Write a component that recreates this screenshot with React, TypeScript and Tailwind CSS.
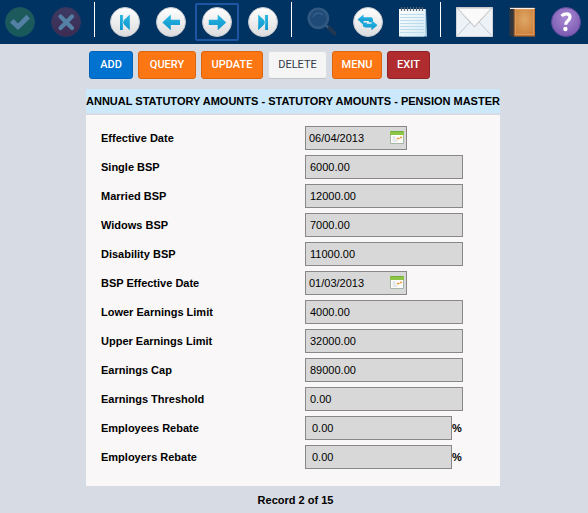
import React, { useState } from "react";

type Field = { id: string; label: string; value: string; kind: "amount" | "date" | "percent" };

const FIELDS: Field[] = [
  { id: "effective-date", label: "Effective Date", value: "06/04/2013", kind: "date" },
  { id: "single-bsp", label: "Single BSP", value: "6000.00", kind: "amount" },
  { id: "married-bsp", label: "Married BSP", value: "12000.00", kind: "amount" },
  { id: "widows-bsp", label: "Widows BSP", value: "7000.00", kind: "amount" },
  { id: "disability-bsp", label: "Disability BSP", value: "11000.00", kind: "amount" },
  { id: "bsp-effective-date", label: "BSP Effective Date", value: "01/03/2013", kind: "date" },
  { id: "lower-limit", label: "Lower Earnings Limit", value: "4000.00", kind: "amount" },
  { id: "upper-limit", label: "Upper Earnings Limit", value: "32000.00", kind: "amount" },
  { id: "earnings-cap", label: "Earnings Cap", value: "89000.00", kind: "amount" },
  { id: "earnings-threshold", label: "Earnings Threshold", value: "0.00", kind: "amount" },
  { id: "employees-rebate", label: "Employees Rebate", value: "0.00", kind: "percent" },
  { id: "employers-rebate", label: "Employers Rebate", value: "0.00", kind: "percent" },
];

const INPUT_STYLE: Record<Field["kind"], string> = {
  amount: "w-[158px] pl-1",
  date: "w-[102px] pl-[3px]",
  percent: "w-[147px] pl-1.5",
};

function Gradients() {
  return (
    <svg className="absolute size-0" aria-hidden="true">
      <defs>
        <linearGradient id="disc" x1="0" y1="0" x2="0" y2="1">
          <stop offset="0" stopColor="#ffffff" />
          <stop offset="1" stopColor="#dcdcde" />
        </linearGradient>
        <linearGradient id="arrow" x1="0" y1="0" x2="0" y2="1">
          <stop offset="0" stopColor="#2cb8e4" />
          <stop offset="1" stopColor="#0c94cc" />
        </linearGradient>
        <linearGradient id="green" x1="0" y1="0" x2="0" y2="1">
          <stop offset="0" stopColor="#1f5a5c" />
          <stop offset="1" stopColor="#17595a" />
        </linearGradient>
        <linearGradient id="red" x1="0" y1="0" x2="0" y2="1">
          <stop offset="0" stopColor="#3c3a63" />
          <stop offset="1" stopColor="#3e2b52" />
        </linearGradient>
        <radialGradient id="purple" cx="0.5" cy="0.35" r="0.65">
          <stop offset="0" stopColor="#a98ad2" />
          <stop offset="1" stopColor="#7a59b0" />
        </radialGradient>
        <linearGradient id="page" x1="0" y1="0" x2="1" y2="1">
          <stop offset="0" stopColor="#ffffff" />
          <stop offset="1" stopColor="#d3e9f4" />
        </linearGradient>
        <radialGradient id="leather" cx="0.5" cy="0.4" r="0.8">
          <stop offset="0" stopColor="#dfa766" />
          <stop offset="1" stopColor="#c97a35" />
        </radialGradient>
      </defs>
    </svg>
  );
}

function Disc({ children, fill = "url(#disc)", rim = "#c3c7cd" }: { children: React.ReactNode; fill?: string; rim?: string }) {
  return (
    <svg viewBox="0 0 30 30" className="block h-[30px] w-[30px]" aria-hidden="true">
      <circle cx="15" cy="15" r="14.5" fill={fill} stroke={rim} strokeWidth="1" />
      {children}
    </svg>
  );
}

const CheckIcon = () => (
  <Disc fill="url(#green)" rim="#1c5761">
    <path d="M5 15.5 8.5 12l4.5 4.4 8.4-8.6 3.6 3.6L13 23z" fill="#5580a5" />
  </Disc>
);
const CancelIcon = () => (
  <Disc fill="url(#red)" rim="#36355d">
    <path d="M9.5 9.5l11.5 11.5M21 9.5l-11.5 11.5" stroke="#5580a5" strokeWidth="4.2" strokeLinecap="round" />
  </Disc>
);
const FirstIcon = () => (
  <Disc>
    <path d="M10 8h3.2v5.8L19.8 7.6v15.6l-6.6-6.4V23H10z" fill="url(#arrow)" />
    <path d="M13.3 8v6.6l-.8.8.8 1V23" stroke="#f2f5f7" strokeWidth="0.7" fill="none" />
  </Disc>
);
const LastIcon = () => (
  <Disc>
    <path d="M20 8h-3.2v5.8L10.2 7.6v15.6l6.6-6.4V23H20z" fill="url(#arrow)" />
    <path d="M16.7 8v6.6l.8.8-.8 1V23" stroke="#f2f5f7" strokeWidth="0.7" fill="none" />
  </Disc>
);
const PrevIcon = () => (
  <Disc>
    <path d="M6.3 15.5l8.5-8v5.3H24V18h-9.2v5.3z" fill="url(#arrow)" />
  </Disc>
);
const NextIcon = () => (
  <Disc>
    <path d="M24.2 15.5l-8.5-8v5.3H6.8V18h8.9v5.3z" fill="url(#arrow)" />
  </Disc>
);
const RefreshIcon = () => (
  <Disc>
    <path d="M4.5 12.5l6-5v2.8h7.2q2.3 0 2.3 2.4v2.6h-4.2v-1.2h-5.3v3.6z" fill="url(#arrow)" />
    <path d="M24.5 18.3l-6 5v-2.8h-6.3q-2.4 0-2.4-2.4v-2.6h4.2v1.2h4.5v-3.6z" fill="url(#arrow)" />
  </Disc>
);
const HelpIcon = () => (
  <Disc fill="url(#purple)" rim="#5e4a9c">
    <path d="M10.6 9q2-2.2 4.6-2.2 3.8 0 3.8 3.3 0 2-2.3 3.8-2 1.5-2 3.9" fill="none" stroke="#fff" strokeWidth="3.2" />
    <circle cx="14.4" cy="22" r="2.2" fill="#fff" />
  </Disc>
);
const SearchIcon = () => (
  <svg viewBox="0 0 30 30" className="block h-[30px] w-[30px]" aria-hidden="true">
    <path d="M21.5 20.5l6 6" stroke="#213850" strokeWidth="4" strokeLinecap="round" />
    <path d="M18 17.5l3 3" stroke="#3a5d82" strokeWidth="2.4" />
    <circle cx="11.3" cy="11.3" r="9.6" fill="#1f4a78" stroke="#315880" strokeWidth="2.6" />
    <path d="M6 10a6 6 0 0 1 10-2" stroke="#345f8b" strokeWidth="1.5" fill="none" />
  </svg>
);
const NotesIcon = () => (
  <svg viewBox="0 0 28 30" className="block h-[30px] w-7" aria-hidden="true">
    <path d="M2 2h25l1 27.5H2z" fill="#a9cfe2" />
    <path d="M0 2h26v26.5l-1 1H0z" fill="url(#page)" />
    <path d="M1 7.5h24M1 10.5h24M1 13.5h24M1 16.5h24M1 19.5h24M1 22.5h24M1 25.5h24" stroke="#bcdcec" strokeWidth="1" />
    <path d="M2.5 0v4M5.5 0v4M8.5 0v4M11.5 0v4M14.5 0v4M17.5 0v4M20.5 0v4M23.5 0v4" stroke="#5c6670" strokeWidth="1.2" />
  </svg>
);
const MailIcon = () => (
  <svg viewBox="0 0 37 30" className="block h-[30px] w-[37px]" aria-hidden="true">
    <path d="M.5.5h36v29H.5z" fill="#edf2f6" stroke="#d0d4d8" />
    <path d="M1.5 28.5L14 15M35.5 28.5L23 15" stroke="#bdc8d2" fill="none" />
    <path d="M1 1h35L18.5 20z" fill="#fafafa" stroke="#bcbfc2" />
    <path d="M2.5 1.8L18.5 19l16-17.2" stroke="#e0e0e0" fill="none" />
  </svg>
);
const BookIcon = () => (
  <svg viewBox="0 0 26 30" className="block h-[30px] w-[26px]" aria-hidden="true">
    <path d="M.5.5h25v29H2q-1.5 0-1.5-2z" fill="#32363c" />
    <path d="M5 1v28.5h21V1z" fill="#b96f30" />
    <path d="M6.5 2.5h18v25h-18z" fill="url(#leather)" stroke="#e3a566" strokeWidth="0.8" />
    <path d="M1 1.4h24.6" stroke="#fff" strokeWidth="1" />
    <path d="M4.8 2v27" stroke="#5d4a3c" strokeWidth="1" />
  </svg>
);
const CalendarIcon = () => (
  <svg viewBox="0 0 14 13" className="block h-[13px] w-3.5" aria-hidden="true">
    <path d="M.5.5h13v12H.5z" fill="#fbfcfb" stroke="#a5b5a8" />
    <path d="M0 0h14v4H0z" fill="#8cc644" />
    <path d="M1 0h12v1H1z" fill="#6fae3c" />
    <path d="M2.5 6h3M2.5 8h4M2.5 10h5" stroke="#d3d8dc" />
    <path d="M7 7.5h2.5M10 6.5h2" stroke="#f39a2c" strokeWidth="1.4" />
  </svg>
);

function ToolButton({ label, focused, disabled, children }: { label: string; focused?: boolean; disabled?: boolean; children: React.ReactNode }) {
  return (
    <button type="button" aria-label={label} disabled={disabled} className="relative shrink-0">
      {focused && <span className="absolute -inset-x-[7px] -inset-y-1 rounded-xs border-2 border-[#1f56a4]" />}
      {children}
    </button>
  );
}

const Divider = () => <div className="-mt-[5px] mr-[15px] ml-[13px] h-[35px] w-px shrink-0 bg-white" />;

function Toolbar() {
  return (
    <nav className="flex h-11 items-start bg-[#003262] pt-[7px] pl-[5px]">
      <div className="flex gap-4">
        <ToolButton label="Accept" disabled><CheckIcon /></ToolButton>
        <ToolButton label="Cancel" disabled><CancelIcon /></ToolButton>
      </div>
      <Divider />
      <div className="flex gap-4">
        <ToolButton label="First record"><FirstIcon /></ToolButton>
        <ToolButton label="Previous record"><PrevIcon /></ToolButton>
        <ToolButton label="Next record" focused><NextIcon /></ToolButton>
        <ToolButton label="Last record"><LastIcon /></ToolButton>
      </div>
      <Divider />
      <div className="flex gap-4">
        <ToolButton label="Search" disabled><SearchIcon /></ToolButton>
        <ToolButton label="Refresh"><RefreshIcon /></ToolButton>
        <ToolButton label="Notes"><NotesIcon /></ToolButton>
      </div>
      <Divider />
      <div className="flex gap-4">
        <ToolButton label="Mail"><MailIcon /></ToolButton>
        <ToolButton label="Manual"><BookIcon /></ToolButton>
        <ToolButton label="Help"><HelpIcon /></ToolButton>
      </div>
    </nav>
  );
}

const ORANGE = "border-[#dc6410] bg-[#fc7614] text-white font-medium";

const ACTIONS = [
  { text: "ADD", look: "w-11 border-[#0062b8] bg-[#0072d0] text-white font-medium" },
  { text: "QUERY", look: "w-[58px] " + ORANGE },
  { text: "UPDATE", look: "w-[62px] " + ORANGE },
  { text: "DELETE", look: "w-[59px] border-[#dcdee2] border-b-[#c0c3c8] bg-[#f5f5f5] text-[#333a48]" },
  { text: "MENU", look: "w-[50px] " + ORANGE },
  { text: "EXIT", look: "w-[43px] border-[#8f2226] bg-[#b02c2f] text-white font-medium" },
];

function FieldRow({ field }: { field: Field }) {
  const [value, setValue] = useState(field.value);
  return (
    <div className="flex items-center">
      <label htmlFor={field.id} className="w-[204px] shrink-0 font-bold">{field.label}</label>
      <div className="relative">
        <input
          id={field.id}
          type="text"
          value={value}
          onChange={(e) => setValue(e.target.value)}
          className={"block h-6 border border-[#888888] bg-[#d8d8d8] outline-none " + INPUT_STYLE[field.kind]}
        />
        {field.kind === "date" && (
          <button type="button" aria-label={"Pick " + field.label} className="absolute top-[5px] right-[3px]">
            <CalendarIcon />
          </button>
        )}
      </div>
      {field.kind === "percent" && <span className="font-bold">%</span>}
    </div>
  );
}

export default function App() {
  return (
    <div className="min-h-screen bg-[#d7dbe3] font-['Liberation_Sans',Arial,sans-serif] text-[11px] leading-4 text-black">
      <Gradients />
      <Toolbar />
      <main className="pr-0.5">
        <div className="mx-auto max-w-[414px]">
          <div className="flex gap-[5px] pt-[7px] pb-2.5 pl-[3px]">
            {ACTIONS.map((a) => (
              <button
                key={a.text}
                type="button"
                className={"h-7 shrink-0 rounded-[3px] border text-center font-['Roboto',sans-serif] " + a.look}
              >
                {a.text}
              </button>
            ))}
          </div>
          <h1 className="h-6 bg-[#cbe9fa] text-center font-bold leading-6 whitespace-nowrap">
            ANNUAL STATUTORY AMOUNTS - STATUTORY AMOUNTS - PENSION MASTER
          </h1>
          <form className="mt-0.5 flex flex-col gap-[5px] bg-[#f9f7f8] pt-[11px] pb-[17px] pl-[15px]">
            {FIELDS.map((f) => (
              <FieldRow key={f.id} field={f} />
            ))}
          </form>
        </div>
      </main>
      <footer className="pt-1.5 pl-[3px] text-center font-bold">Record 2 of 15</footer>
    </div>
  );
}
